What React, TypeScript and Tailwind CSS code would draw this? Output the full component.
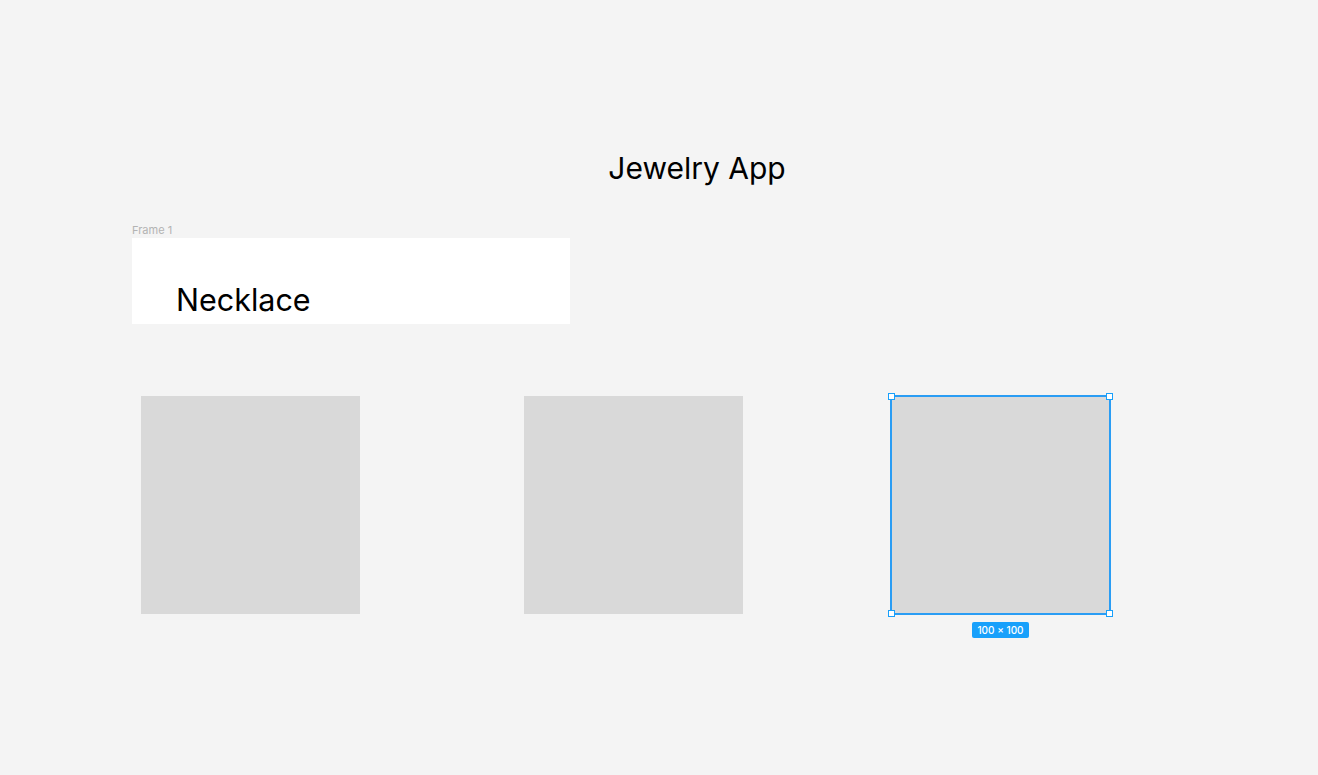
const Handle = ({ className }: { className: string }) => (
  <div
    className={`absolute w-[7px] h-[7px] bg-white border border-[#18a0fb] ${className}`}
  />
);

const Rect = () => <div className="w-[219px] h-[218px] bg-[#d9d9d9]" />;

const App = () => {
  return (
    <div
      className="w-[1318px] h-[775px] bg-[#f4f4f4] overflow-hidden flex flex-col pt-[147px]"
      style={{ fontFamily: "Inter, 'Noto Sans', sans-serif" }}
    >
      <div className="flex justify-center pl-[76px]">
        <h1 className="text-[30px] leading-[42px] text-black">Jewelry App</h1>
      </div>

      {/* Frame 1 */}
      <div className="ml-[132px] mt-[34px]">
        <div className="text-[11px] leading-[14px] text-[#b3b3b3] mb-[1px]">Frame 1</div>
        <div className="w-[438px] h-[86px] bg-white pl-[44px] pt-[45px]">
          <div className="text-[30.5px] leading-[34px] text-black">Necklace</div>
        </div>
      </div>

      {/* Rectangles */}
      <div className="flex items-start mt-[72px] pl-[141px]">
        <Rect />
        <div className="ml-[164px]">
          <Rect />
        </div>
        <div className="relative ml-[147px] -mt-[1px] w-[221px] h-[220px] bg-[#d9d9d9] border-2 border-[#2a9df4]">
          <Handle className="-left-[4px] -top-[4px]" />
          <Handle className="-right-[4px] -top-[4px]" />
          <Handle className="-left-[4px] -bottom-[4px]" />
          <Handle className="-right-[4px] -bottom-[4px]" />
          <div className="absolute left-0 right-0 -bottom-[25px] flex justify-center">
            <div className="h-[16px] px-[5px] rounded-[2px] bg-[#18a0fb] text-white text-[10px] leading-[16px] font-medium">
              100 × 100
            </div>
          </div>
        </div>
      </div>
    </div>
  );
};

export default App;
